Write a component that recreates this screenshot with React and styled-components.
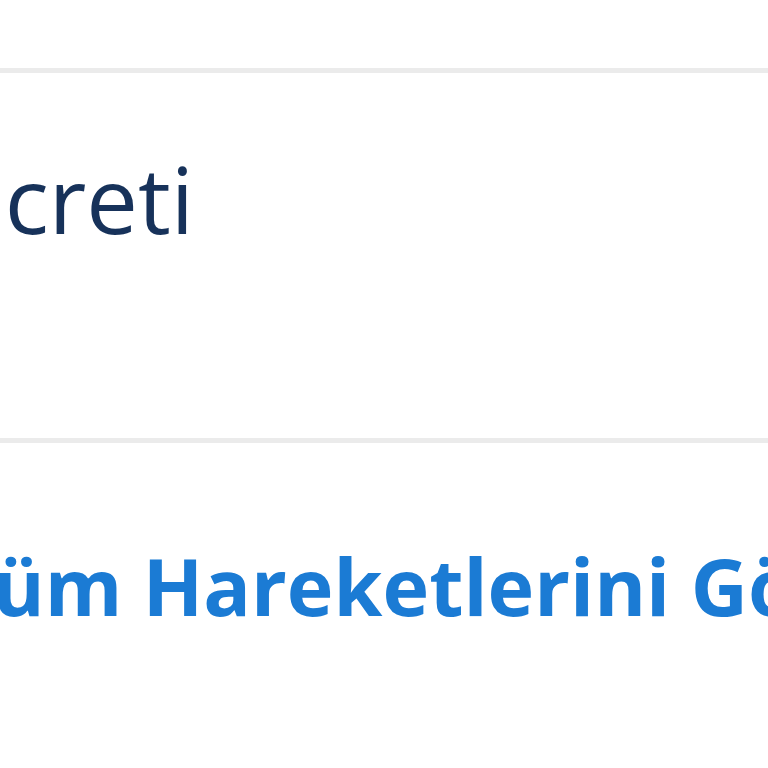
import React from "react";
import styled, { createGlobalStyle } from "styled-components";

const Global = createGlobalStyle`
  html, body { margin: 0; padding: 0; background: #ffffff; overflow: hidden; }
  body { font-family: "Open Sans", "Noto Sans", sans-serif; }
`;

const Page = styled.div`
  width: 768px;
  height: 768px;
  overflow: hidden;
  display: flex;
  flex-direction: column;
  padding-top: 68px;
  box-sizing: border-box;
`;

const Row = styled.div`
  border-top: 5px solid #ebebeb;
  height: ${(p) => p.$h}px;
  box-sizing: border-box;
  padding-top: ${(p) => p.$pt}px;
  white-space: nowrap;
`;

const LabelBox = styled.div`
  width: 194px;
  display: flex;
  justify-content: flex-end;
`;

const Label = styled.span`
  display: block;
  flex: none;
  font-size: 92px;
  line-height: 1;
  color: #17325a;
  font-weight: 500;
`;

const Link = styled.a`
  display: block;
  margin-left: ${(p) => p.$shift}px;
  font-size: 79px;
  line-height: 1;
  font-weight: 700;
  color: #1b7bd4;
  text-decoration: none;
`;

export default function App() {
  return (
    <>
      <Global />
      <Page>
        <Row $h={370} $pt={80}>
          <LabelBox>
            <Label>Hizmet Ücreti</Label>
          </LabelBox>
        </Row>
        <Row $h={330} $pt={103}>
          <Link href="#" $shift={-53}>Tüm Hareketlerini Gör</Link>
        </Row>
      </Page>
    </>
  );
}
